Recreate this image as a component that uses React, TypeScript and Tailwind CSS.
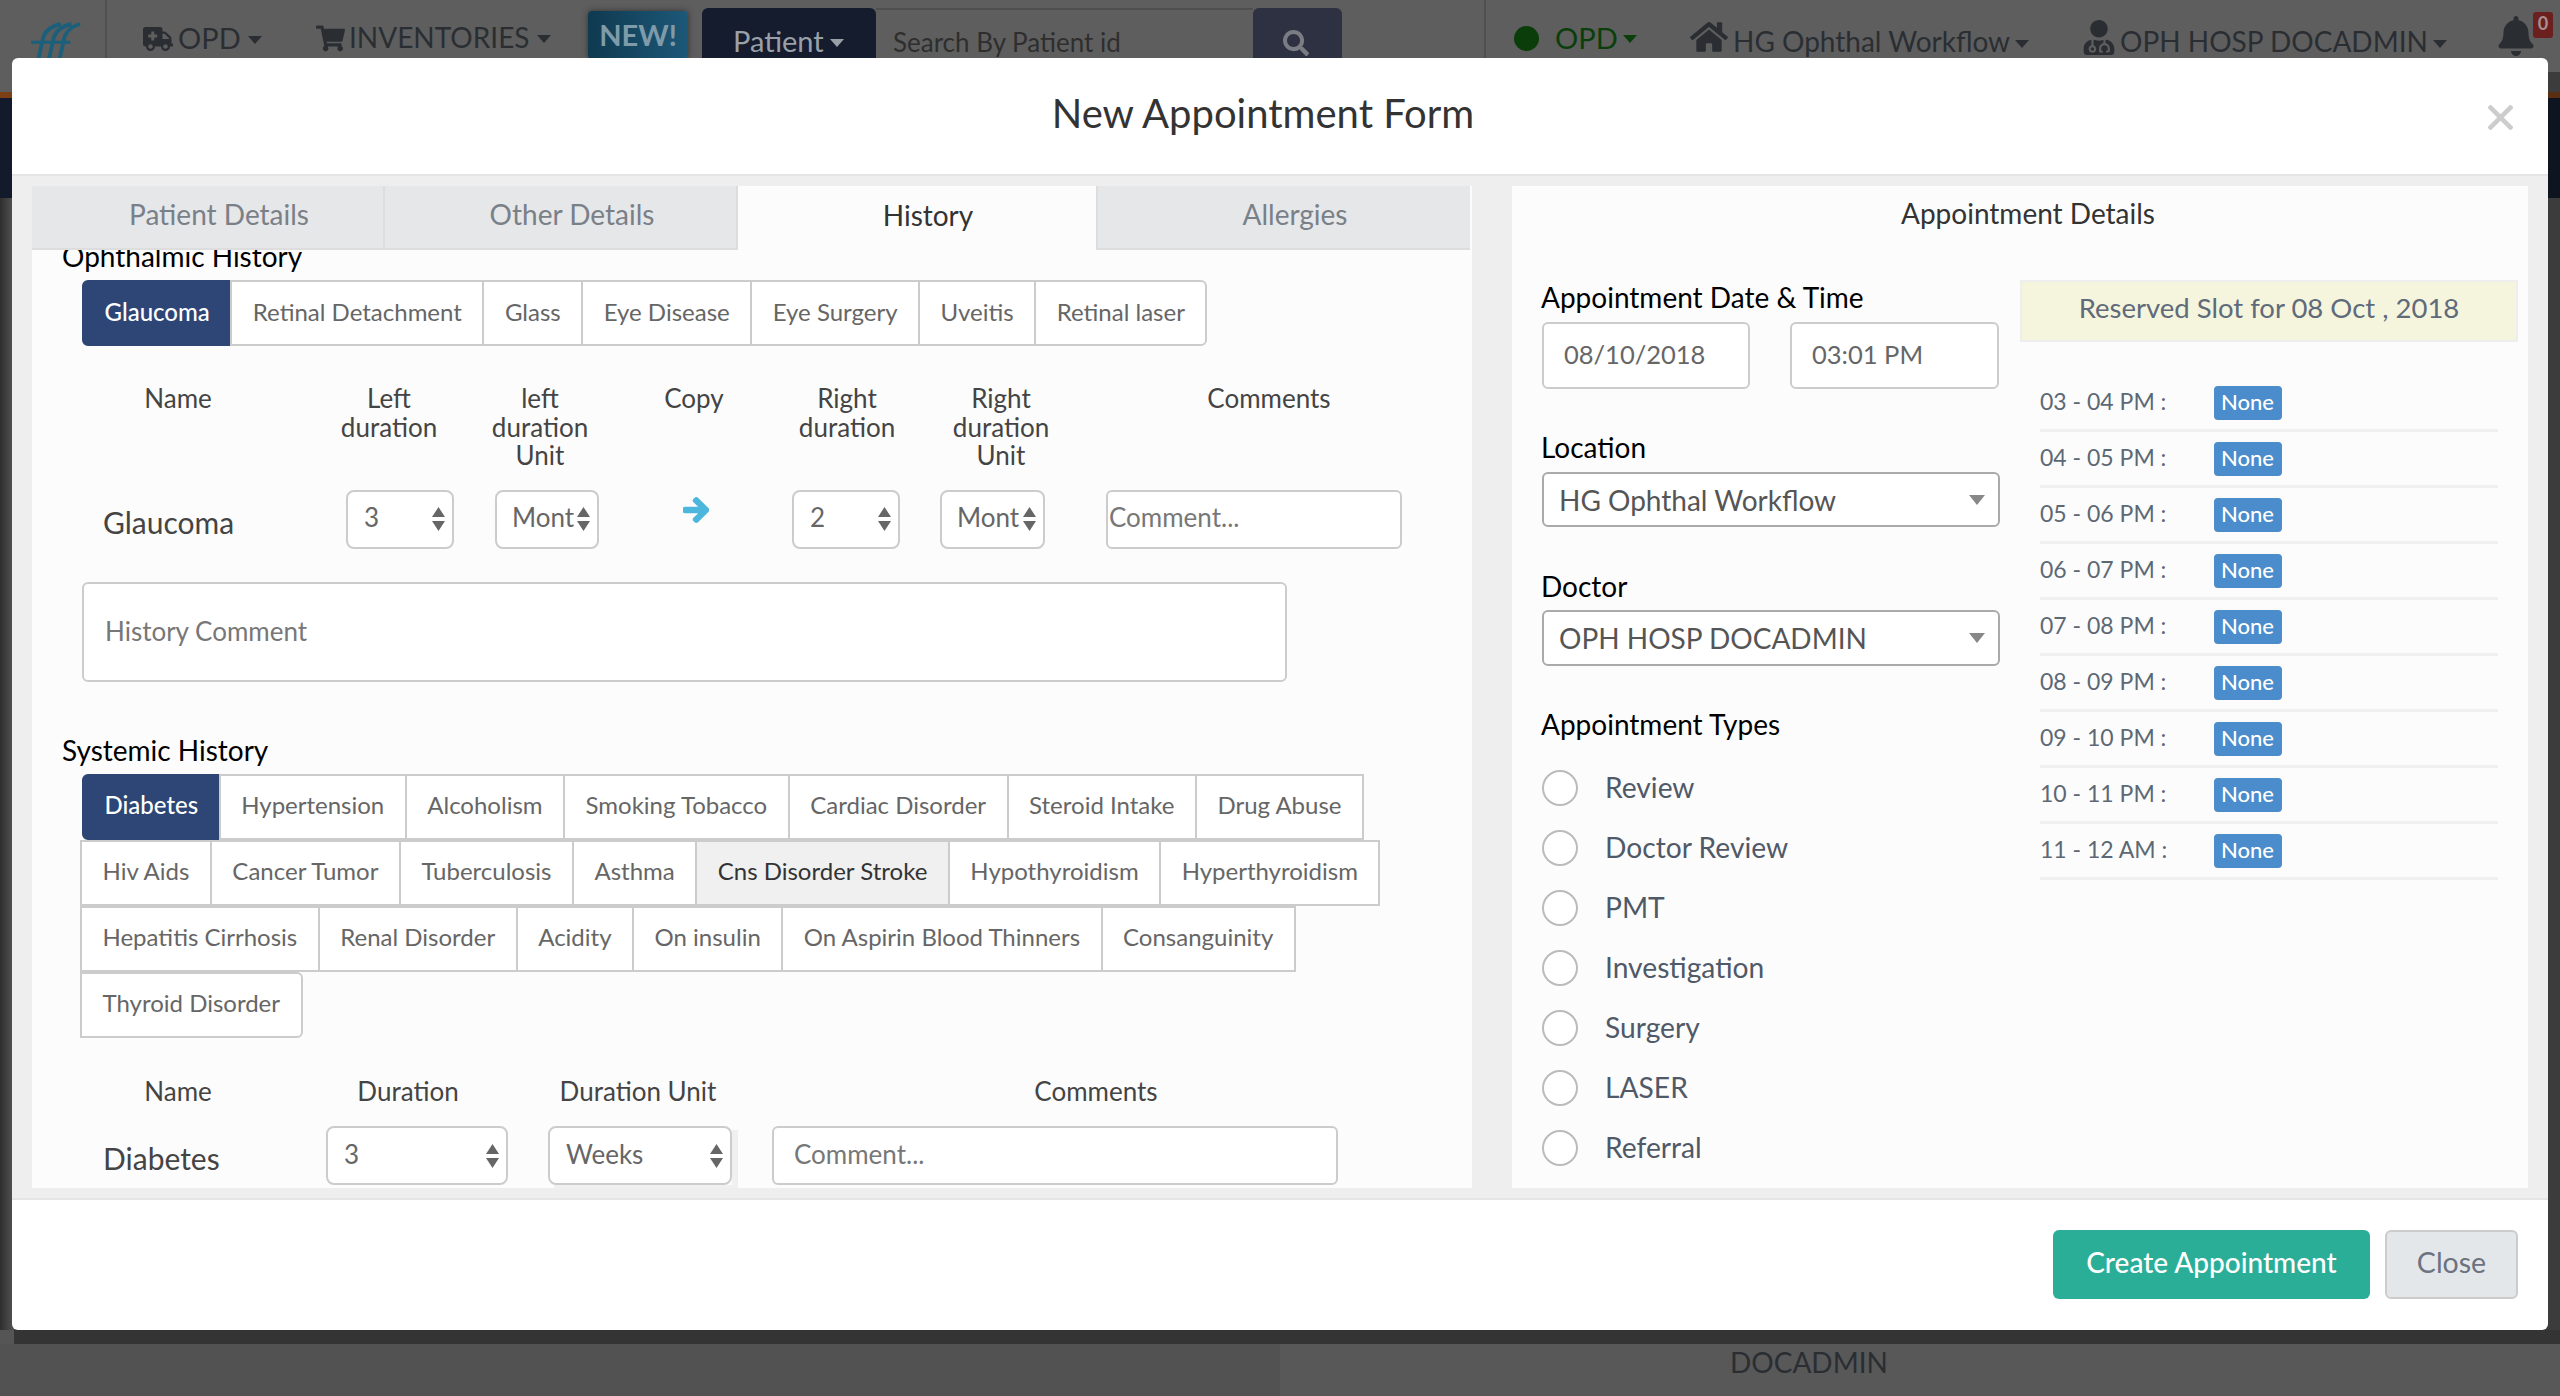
import { FaAmbulance, FaArrowRight, FaBell, FaHome, FaSearch, FaShoppingCart, FaUserMd } from 'react-icons/fa'

const ophthalmicChips = ['Glaucoma', 'Retinal Detachment', 'Glass', 'Eye Disease', 'Eye Surgery', 'Uveitis', 'Retinal laser']

const systemicChips = [
  'Diabetes', 'Hypertension', 'Alcoholism', 'Smoking Tobacco', 'Cardiac Disorder', 'Steroid Intake', 'Drug Abuse',
  'Hiv Aids', 'Cancer Tumor', 'Tuberculosis', 'Asthma', 'Cns Disorder Stroke', 'Hypothyroidism', 'Hyperthyroidism',
  'Hepatitis Cirrhosis', 'Renal Disorder', 'Acidity', 'On insulin', 'On Aspirin Blood Thinners', 'Consanguinity',
  'Thyroid Disorder',
]

const appointmentTypes = ['Review', 'Doctor Review', 'PMT', 'Investigation', 'Surgery', 'LASER', 'Referral']

const slots = [
  '03 - 04 PM :', '04 - 05 PM :', '05 - 06 PM :', '06 - 07 PM :', '07 - 08 PM :',
  '08 - 09 PM :', '09 - 10 PM :', '10 - 11 PM :', '11 - 12 AM :',
]

function Caret({ className }: { className: string }) {
  return <span className={`inline-block w-0 h-0 border-x-[7px] border-x-transparent border-t-[8px] ${className}`} />
}

function TopNav() {
  return (
    <div className="h-[72px] bg-[#5e5e5e] flex items-start text-[29px] text-[#2a2e33] whitespace-nowrap">
      <svg className="ml-[30px] mt-[20px] shrink-0" width="52" height="60" viewBox="0 0 54 60" fill="none" stroke="#1b5f7a" strokeWidth="4">
        <path d="M4 60 L14 16 Q18 6 32 3" />
        <path d="M15 60 L25 16 Q29 6 43 3" />
        <path d="M26 60 L36 16 Q40 6 52 3" />
        <path d="M1 22 H42" strokeWidth="3" />
      </svg>
      <div className="ml-[23px] w-[2px] h-[72px] bg-[#4f4f4f] shrink-0" />
      <div className="ml-[36px] mt-[16px] w-[173px] shrink-0 flex items-center">
        <FaAmbulance className="w-[30px] h-[30px] mt-[3px]" />
        <span className="ml-[5px]">OPD</span>
        <Caret className="ml-[7px] mt-[4px] border-t-[#2a2e33]" />
      </div>
      <div className="mt-[16px] w-[272px] shrink-0 flex items-center text-[28px]">
        <FaShoppingCart className="w-[29px] h-[29px] mt-[3px]" />
        <span className="ml-[4px]">INVENTORIES</span>
        <Caret className="ml-[7px] mt-[4px] border-t-[#2a2e33]" />
      </div>
      <div className="mt-[11px] w-[100px] h-[48px] shrink-0 rounded-[4px] bg-gradient-to-r from-[#0f3a50] to-[#1d5878] text-[#7f9aa8] text-[29px] font-bold flex items-center justify-center shadow-[0_0_6px_#333]">
        NEW!
      </div>
      <div className="ml-[14px] mt-[8px] w-[174px] h-[64px] shrink-0 bg-[#141c2e] rounded-t-[6px] text-[#9aa0a8] flex items-center pl-[31px] pt-[2px]">
        Patient
        <Caret className="ml-[6px] mt-[4px] border-t-[#9aa0a8]" />
      </div>
      <div className="mt-[8px] w-[377px] h-[64px] shrink-0 border-t-2 border-[#4f4f4f] pl-[17px] pt-[13px] text-[26px] text-[#2e2e2e]">
        Search By Patient id
      </div>
      <div className="mt-[8px] w-[89px] h-[64px] shrink-0 bg-[#2d3142] rounded-t-[6px] pl-[30px] pt-[22px] text-[#7b7b83]">
        <FaSearch className="w-[26px] h-[26px]" />
      </div>
      <div className="ml-[142px] w-[2px] h-[72px] shrink-0 bg-[#4f4f4f]" />
      <div className="ml-[28px] mt-[26px] w-[25px] h-[25px] shrink-0 rounded-full bg-[#0a3d0a]" />
      <div className="ml-[16px] mt-[16px] w-[135px] shrink-0 flex items-center text-[#0a3f0a]">
        OPD
        <Caret className="ml-[5px] mt-[2px] border-t-[#0a3f0a]" />
      </div>
      <FaHome className="mt-[20px] w-[38px] h-[34px] shrink-0" />
      <div className="ml-[5px] mt-[20px] w-[350px] shrink-0 flex items-center text-[28px]">
        HG Ophthal Workflow
        <Caret className="ml-[5px] mt-[6px] border-t-[#2a2e33]" />
      </div>
      <FaUserMd className="mt-[20px] w-[32px] h-[35px] shrink-0" />
      <div className="ml-[5px] mt-[20px] w-[377px] shrink-0 flex items-center text-[28px]">
        OPH HOSP DOCADMIN
        <Caret className="ml-[5px] mt-[6px] border-t-[#2a2e33]" />
      </div>
      <FaBell className="mt-[16px] w-[38px] h-[40px] shrink-0" />
      <div className="-ml-[2px] mt-[12px] w-[20px] h-[26px] shrink-0 rounded-[3px] bg-[#6b1f1f] text-[#a98f8f] text-[18px] font-bold text-center leading-[22px]">
        0
      </div>
    </div>
  )
}

function Chip({ label, active, tinted }: { label: string; active?: boolean; tinted?: boolean }) {
  return (
    <div
      className={`h-[66px] flex items-center px-[20.5px] pb-[3px] border-2 text-[24px] first:rounded-l-[6px] last:rounded-r-[6px] ${
        active
          ? 'ml-0 bg-[#2d4675] border-[#2d4675] text-white font-medium'
          : tinted
            ? '-ml-[2px] bg-[#f0f0f0] border-[#ccc] text-[#333]'
            : '-ml-[2px] bg-white border-[#ccc] text-[#666]'
      }`}
    >
      {label}
    </div>
  )
}

function SpinField({ value, width, compact }: { value: string; width: string; compact?: boolean }) {
  return (
    <div className={`${width} h-[59px] shrink-0 bg-white border-2 border-[#ccc] rounded-[8px] flex items-center justify-between text-[26px] text-[#666] ${compact ? 'pl-[15px] pr-[7px]' : 'pl-[16px] pr-[7px]'}`}>
      <span className="-mt-[3px] overflow-hidden">{value}</span>
      <svg className="shrink-0" width="13" height="24" viewBox="0 0 13 24" fill="#666">
        <path d="M6.5 0 L13 10 H0 Z" />
        <path d="M6.5 24 L13 14 H0 Z" />
      </svg>
    </div>
  )
}

function Heading({ children }: { children: string }) {
  return <div className="h-[40px] leading-[40px] text-[28px] text-black">{children}</div>
}

function HistoryPanel() {
  return (
    <div className="w-[1440px] h-[1002px] flex flex-col overflow-hidden bg-[#fcfcfc]">
      <div className="h-[64px] shrink-0 flex text-[28px] relative z-10">
        <div className="w-[353px] bg-[#e6e7e9] text-[#7a8088] border-r-2 border-b-2 border-[#ddd] flex items-center justify-center pl-[23px] pb-[6px]">Patient Details</div>
        <div className="w-[353px] bg-[#e6e7e9] text-[#7a8088] border-r-2 border-b-2 border-[#ddd] flex items-center justify-center pl-[23px] pb-[6px]">Other Details</div>
        <div className="w-[360px] bg-[#fcfcfc] text-[#333] border-r-2 border-[#ddd] flex items-center justify-center pl-[22px] pb-[7px]">History</div>
        <div className="w-[372px] bg-[#e6e7e9] text-[#7a8088] border-b-2 border-[#ddd] flex items-center justify-center pl-[22px] pb-[6px]">Allergies</div>
      </div>
      <div className="-mt-[14px] pl-[30px]">
        <Heading>Ophthalmic History</Heading>
        <div className="mt-[4px] ml-[20px] flex">
          {ophthalmicChips.map((c, i) => <Chip key={c} label={c} active={i === 0} />)}
        </div>

        <div className="mt-[38px] ml-[20px] flex text-[26px] leading-[28.5px] text-[#444] text-center">
          <div className="w-[192px]">Name</div>
          <div className="ml-[50px] w-[130px]">Left duration</div>
          <div className="ml-[21px] w-[130px]">left duration Unit</div>
          <div className="ml-[39px] w-[100px]">Copy</div>
          <div className="ml-[38px] w-[130px]">Right duration</div>
          <div className="ml-[24px] w-[130px]">Right duration Unit</div>
          <div className="ml-[53px] w-[300px]">Comments</div>
        </div>

        <div className="mt-[20px] ml-[20px] flex items-start">
          <div className="ml-[21px] w-[243px] shrink-0 mt-[12px] text-[30px] leading-[40px] text-[#444]">Glaucoma</div>
          <SpinField value="3" width="w-[108px]" />
          <div className="ml-[41px]"><SpinField value="Mont" width="w-[104px]" compact /></div>
          <FaArrowRight className="ml-[84px] mt-[6px] w-[26px] h-[28px] text-[#4db6dc] [stroke-width:40]" />
          <div className="ml-[83px]"><SpinField value="2" width="w-[108px]" /></div>
          <div className="ml-[40px]"><SpinField value="Mont" width="w-[105px]" compact /></div>
          <div className="ml-[61px] w-[296px] h-[59px] bg-white border-2 border-[#ccc] rounded-[6px] pl-[1px] text-[26px] text-[#777] flex items-center">
            <span className="-mt-[3px]">Comment...</span>
          </div>
        </div>

        <div className="mt-[33px] ml-[20px] w-[1205px] h-[100px] bg-white border-2 border-[#ccc] rounded-[6px] pl-[21px] flex items-center text-[26px] text-[#777]">
          History Comment
        </div>

        <div className="mt-[48px]"><Heading>Systemic History</Heading></div>
        <div className="mt-[4px] ml-[18px] w-[1400px] pl-[2px] flex flex-wrap">
          {systemicChips.map((c, i) => <Chip key={c} label={c} active={i === 0} tinted={c === 'Cns Disorder Stroke'} />)}
        </div>

        <div className="mt-[39px] ml-[20px] flex text-[26px] leading-[28.5px] text-[#444] text-center">
          <div className="w-[192px]">Name</div>
          <div className="ml-[41px] w-[186px]">Duration</div>
          <div className="ml-[37px] w-[200px]">Duration Unit</div>
          <div className="ml-[108px] w-[500px]">Comments</div>
        </div>

        <div className="mt-[21px] ml-[20px] flex items-start">
          <div className="ml-[21px] w-[223px] shrink-0 mt-[12px] text-[30px] leading-[40px] text-[#444]">Diabetes</div>
          <SpinField value="3" width="w-[182px]" />
          <div className="ml-[40px] shadow-[6px_4px_0_#f0f0f0]"><SpinField value="Weeks" width="w-[184px]" /></div>
          <div className="ml-[40px] w-[566px] h-[59px] bg-white border-2 border-[#ccc] rounded-[6px] pl-[20px] text-[26px] text-[#777] flex items-center">
            <span className="-mt-[3px]">Comment...</span>
          </div>
        </div>
      </div>
    </div>
  )
}

function DropField({ value, height }: { value: string; height: string }) {
  return (
    <div className={`w-[458px] ${height} bg-white border-2 border-[#aaa] rounded-[6px] pl-[15px] pr-[13px] flex items-center justify-between text-[28px] text-[#555]`}>
      <span>{value}</span>
      <span className="w-0 h-0 border-x-[8px] border-x-transparent border-t-[10px] border-t-[#888]" />
    </div>
  )
}

function AppointmentPanel() {
  return (
    <div className="w-[1016px] h-[1002px] bg-[#fcfcfc] overflow-hidden">
      <div className="h-[64px] flex items-center justify-center text-[28px] text-[#333] pl-[16px] pb-[10px]">Appointment Details</div>
      <div className="flex pl-[29px]">
        <div className="w-[479px] shrink-0 pt-[27px]">
          <Heading>Appointment Date &amp; Time</Heading>
          <div className="mt-[5px] flex text-[25.5px] text-[#666]">
            <div className="ml-[1px] w-[208px] h-[67px] bg-white border-2 border-[#ccc] rounded-[6px] pl-[20px] pb-[3px] flex items-center">08/10/2018</div>
            <div className="ml-[40px] w-[209px] h-[67px] bg-white border-2 border-[#ccc] rounded-[6px] pl-[20px] pb-[3px] flex items-center">03:01 PM</div>
          </div>
          <div className="mt-[38px]"><Heading>Location</Heading></div>
          <div className="mt-[5px] ml-[1px]"><DropField value="HG Ophthal Workflow" height="h-[55px]" /></div>
          <div className="mt-[39px]"><Heading>Doctor</Heading></div>
          <div className="mt-[4px] ml-[1px]"><DropField value="OPH HOSP DOCADMIN" height="h-[56px]" /></div>
          <div className="mt-[38px]"><Heading>Appointment Types</Heading></div>
          <div className="mt-[14px]">
            {appointmentTypes.map(t => (
              <div key={t} className="h-[60px] flex items-center text-[28.2px] text-[#4f5967]">
                <span className="ml-[1px] w-[36px] h-[36px] rounded-full bg-white border-2 border-[#bbb] shrink-0" />
                <span className="ml-[27px] pb-[1px]">{t}</span>
              </div>
            ))}
          </div>
        </div>
        <div className="w-[498px] shrink-0 pt-[30px]">
          <div className="h-[62px] bg-[#f5f5dd] border-2 border-[#eee] flex items-center justify-center text-[27.5px] text-[#5f6b7a] pb-[7px]">
            Reserved Slot for 08 Oct , 2018
          </div>
          <div className="mt-[34px] ml-[20px] w-[458px]">
            {slots.map(s => (
              <div key={s} className="h-[56px] border-b-[3px] border-[#f0f0f0] flex items-center text-[23px] text-[#5d6875]">
                <span className="w-[174px] pb-[2px]">{s}</span>
                <span className="w-[68px] h-[34px] rounded-[4px] bg-[#4a8ccc] text-white text-[22px] font-medium flex items-center justify-center pr-[1px] pb-[2px]">None</span>
              </div>
            ))}
          </div>
        </div>
      </div>
    </div>
  )
}

function AppointmentModal() {
  return (
    <div className="absolute left-[12px] top-[58px] w-[2536px] h-[1272px] bg-white rounded-[6px] flex flex-col">
      <div className="h-[118px] shrink-0 border-b-2 border-[#e5e5e5] relative flex items-center justify-center pb-[7px] pr-[34px]">
        <div className="text-[40px] text-[#333]">New Appointment Form</div>
        <svg className="absolute right-[35px] top-[47px]" width="25" height="25" viewBox="0 0 25 25" stroke="#ccc" strokeWidth="4.5">
          <path d="M1 1 L24 24 M24 1 L1 24" />
        </svg>
      </div>
      <div className="h-[1022px] shrink-0 bg-[#eeeeee] px-[20px] py-[10px] flex gap-[40px]">
        <HistoryPanel />
        <AppointmentPanel />
      </div>
      <div className="h-[132px] shrink-0 border-t-2 border-[#e5e5e5] flex justify-end gap-[15px] pt-[30px] pr-[30px]">
        <div className="w-[317px] h-[69px] rounded-[6px] bg-[#2bae97] text-white text-[28px] font-medium flex items-center justify-center pb-[6px]">Create Appointment</div>
        <div className="w-[133px] h-[69px] rounded-[6px] bg-[#e4e7ea] border-2 border-[#ccc] text-[#6b7280] text-[28.5px] flex items-center justify-center pb-[5px]">Close</div>
      </div>
    </div>
  )
}

export default function App() {
  return (
    <div className="relative w-[2560px] h-[1396px] overflow-hidden bg-[#585858] font-['Lato','Noto_Sans',sans-serif]">
      <TopNav />
      <div className="h-[20px] flex justify-between">
        <div className="w-[1280px] bg-[#5e5e5e]" />
        <div className="w-[1280px] bg-[#3c3c3c]" />
      </div>
      <div className="h-[6px] bg-gradient-to-r from-[#7d3f14] to-[#5a2e12]" />
      <div className="h-[100px] bg-gradient-to-r from-[#131a2b] to-[#0e1420]" />
      <div className="h-[1132px] flex justify-between bg-[#3c3c3c]">
        <div className="w-[14px] bg-gradient-to-r from-[#2e2e2e] to-[#555555]" />
      </div>
      <div className="h-[14px] bg-[#555555] pl-[14px]">
        <div className="h-[14px] bg-[#343434]" />
      </div>
      <div className="h-[52px] flex">
        <div className="w-[1280px] bg-[#525252]" />
        <div className="flex-1 bg-[#585858] pl-[450px] text-[28px] leading-[36px] text-[#2a2e33]">DOCADMIN</div>
      </div>
      <AppointmentModal />
    </div>
  )
}
